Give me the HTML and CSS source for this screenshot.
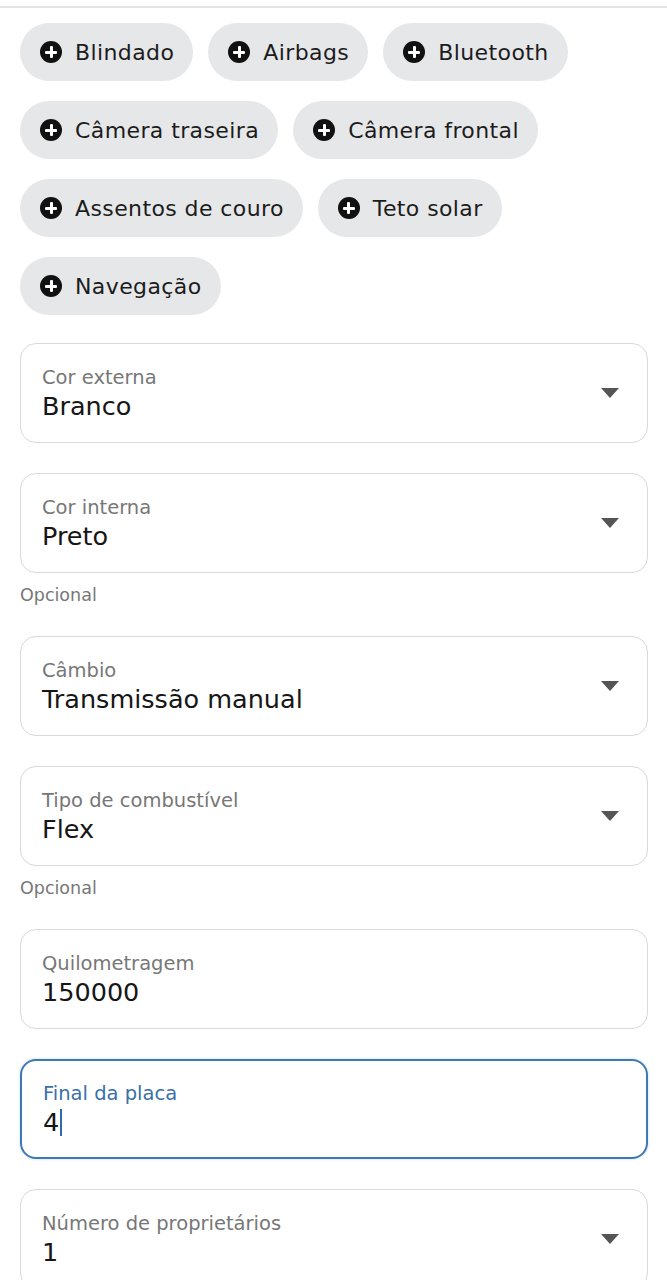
FILE: index.html
```html
<!DOCTYPE html>
<html lang="pt-br">

<head>
    <meta charset="UTF-8">
    <meta name="viewport" content="width=device-width, initial-scale=1.0">
    <title>Detalhes do veículo</title>
    <link rel="stylesheet" href="styles.css">
</head>

<body>
    <div class="top-line"></div>

    <div class="page">
        <!-- Opcionais do veículo -->
        <div class="chips">
            <button class="chip"><span class="plus"></span>Blindado</button>
            <button class="chip"><span class="plus"></span>Airbags</button>
            <button class="chip"><span class="plus"></span>Bluetooth</button>
            <button class="chip"><span class="plus"></span>Câmera traseira</button>
            <button class="chip"><span class="plus"></span>Câmera frontal</button>
            <button class="chip"><span class="plus"></span>Assentos de couro</button>
            <button class="chip"><span class="plus"></span>Teto solar</button>
            <button class="chip"><span class="plus"></span>Navegação</button>
        </div>

        <!-- Campos -->
        <div class="field">
            <div class="field-text">
                <span class="label">Cor externa</span>
                <span class="value">Branco</span>
            </div>
            <span class="caret"></span>
        </div>

        <div class="field has-hint">
            <div class="field-text">
                <span class="label">Cor interna</span>
                <span class="value">Preto</span>
            </div>
            <span class="caret"></span>
        </div>
        <p class="hint">Opcional</p>

        <div class="field">
            <div class="field-text">
                <span class="label">Câmbio</span>
                <span class="value">Transmissão manual</span>
            </div>
            <span class="caret"></span>
        </div>

        <div class="field has-hint">
            <div class="field-text">
                <span class="label">Tipo de combustível</span>
                <span class="value">Flex</span>
            </div>
            <span class="caret"></span>
        </div>
        <p class="hint">Opcional</p>

        <div class="field">
            <div class="field-text">
                <span class="label">Quilometragem</span>
                <span class="value">150000</span>
            </div>
        </div>

        <div class="field focused">
            <div class="field-text">
                <span class="label">Final da placa</span>
                <span class="value">4<span class="cursor"></span></span>
            </div>
        </div>

        <div class="field">
            <div class="field-text">
                <span class="label">Número de proprietários</span>
                <span class="value">1</span>
            </div>
            <span class="caret"></span>
        </div>
    </div>
</body>

</html>
```

FILE: styles.css
```css
/* Reset */
* {
    margin: 0;
    padding: 0;
    box-sizing: border-box;
}

body {
    font-family: 'DejaVu Sans', 'Noto Sans', sans-serif;
    background: #fff;
    color: #1a1a1a;
    padding-top: 6px;
}

.top-line {
    height: 2px;
    background-color: #e4e4e4;
}

.page {
    padding: 15px 19px 0 20px;
}

/* Chips */
.chips {
    display: flex;
    flex-wrap: wrap;
    gap: 20px 15px;
    margin-bottom: 28px;
}

.chip {
    display: flex;
    align-items: center;
    height: 58px;
    padding: 0 19px 0 20px;
    border: none;
    border-radius: 29px;
    background-color: #e6e7e9;
    font-family: inherit;
    font-size: 22px;
    letter-spacing: 0.4px;
    color: #1c1c1c;
}

.plus {
    position: relative;
    width: 22px;
    height: 22px;
    border-radius: 50%;
    background-color: #111;
    margin-right: 13px;
    flex-shrink: 0;
}

.plus::before,
.plus::after {
    content: "";
    position: absolute;
    background-color: #fff;
    border-radius: 1px;
}

.plus::before {
    left: 5px;
    top: 9.5px;
    width: 12px;
    height: 3px;
}

.plus::after {
    left: 9.5px;
    top: 5px;
    width: 3px;
    height: 12px;
}

/* Campos */
.field {
    display: flex;
    align-items: center;
    height: 100px;
    border: 1.5px solid #d9d9d9;
    border-radius: 16px;
    padding: 0 28px 0 21px;
    margin-bottom: 30px;
}

.field.has-hint {
    margin-bottom: 10px;
}

.field-text {
    flex: 1;
    display: flex;
    flex-direction: column;
}

.label {
    font-size: 19.5px;
    line-height: 26px;
    color: #777;
}

.value {
    font-size: 25.5px;
    line-height: 30px;
    color: #161616;
}

.caret {
    width: 0;
    height: 0;
    border-left: 9px solid transparent;
    border-right: 9px solid transparent;
    border-top: 10px solid #555;
}

.hint {
    font-size: 17.5px;
    line-height: 24px;
    color: #777;
    margin-bottom: 29px;
}

/* Campo em foco */
.field.focused {
    border: 2px solid #3d79b2;
    box-shadow: 0 0 3px rgba(61, 121, 178, 0.3);
}

.field.focused .label {
    color: #3a70a8;
}

.cursor {
    display: inline-block;
    width: 2px;
    height: 27px;
    background-color: #2d6cab;
    vertical-align: -5px;
    margin-left: 1px;
}
```
